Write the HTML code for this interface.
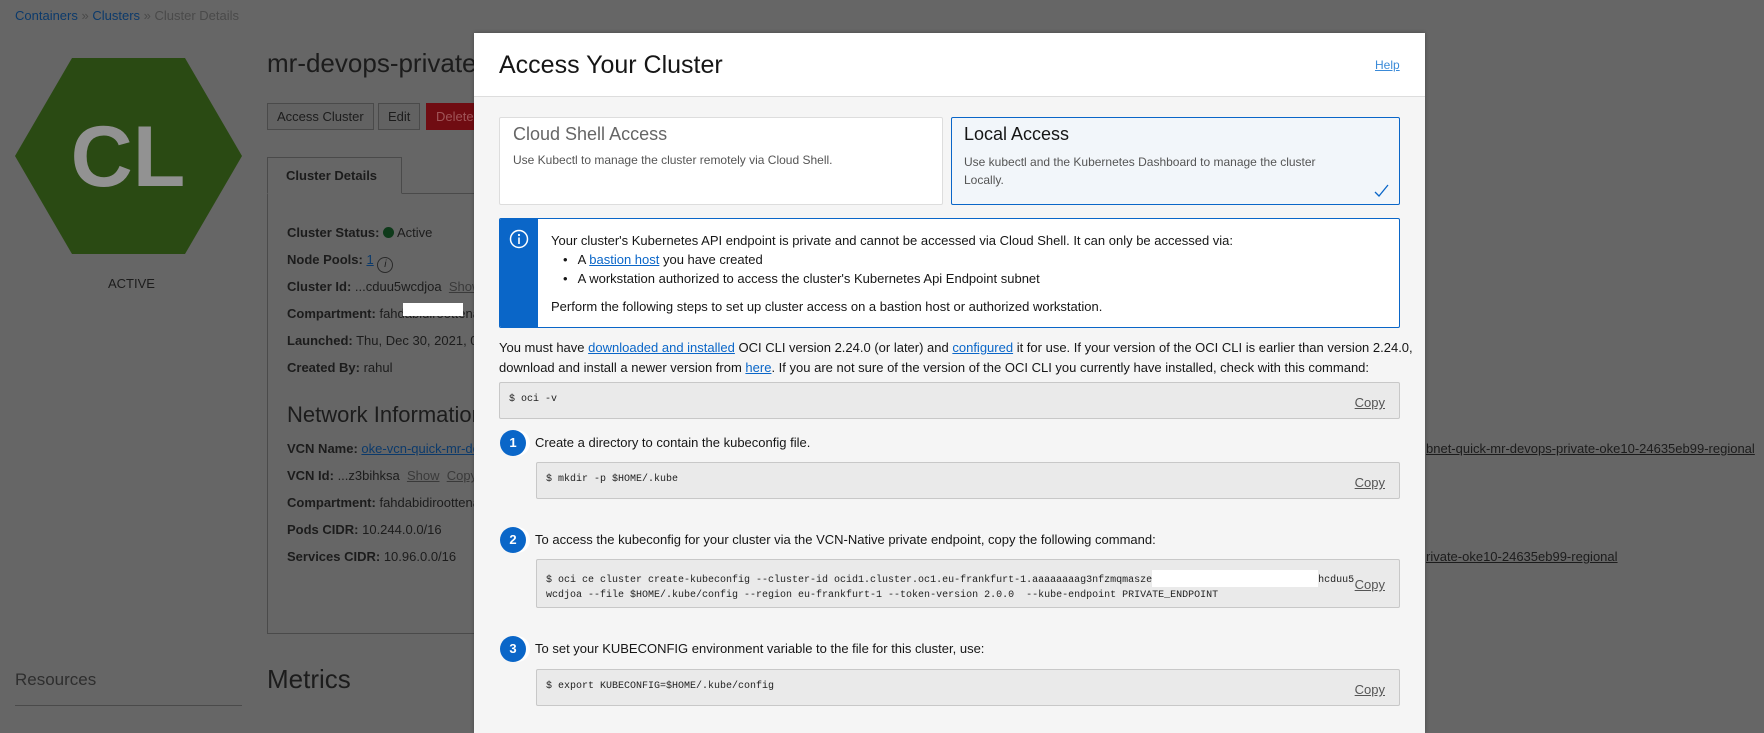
<!DOCTYPE html>
<html><head><meta charset="utf-8"><style>
*{margin:0;padding:0;box-sizing:border-box}
body{width:1764px;height:715px;overflow:hidden;background:#666;font-family:"Liberation Sans",sans-serif;position:relative;color:#1c1c1c}
.a{position:absolute;white-space:nowrap}
.lk{color:#0c3a6b;text-decoration:underline}
.b{font-weight:bold}
.pl{font-size:13px;color:#1c1c1c}
.btn{position:absolute;height:27px;border:1px solid #4a4a4a;background:#626262;font-size:13px;line-height:25px;padding:0 9px;color:#1c1c1c}
.m{position:absolute;left:474px;top:33px;width:951px;height:700px;background:#f5f5f5;box-shadow:0 0 4px rgba(0,0,0,.3)}
.mt{font-size:13px;color:#161616}
.ml{color:#0a66c8;text-decoration:underline}
.code{position:absolute;background:#eaeaea;border:1px solid #c8c8c8;border-radius:2px;font-family:"Liberation Mono",monospace;font-size:10px;color:#222}
.copy{position:absolute;right:14px;font-family:"Liberation Sans",sans-serif;font-size:13px;color:#555;text-decoration:underline}
.num{position:absolute;width:26px;height:26px;border-radius:50%;background:#0a66c8;color:#fff;font-weight:bold;font-size:13px;text-align:center;line-height:26px;box-shadow:4px 0 0 #fff}
</style></head><body>
<div class="a" style="left:15px;top:8px;font-size:13px;color:#4a4a4a"><span style="color:#0c3a6b">Containers</span> » <span style="color:#0c3a6b">Clusters</span> » Cluster Details</div>
<svg class="a" style="left:15px;top:58px" width="227" height="196"><polygon points="57,0 170,0 227,98 170,196 57,196 0,98" fill="#2a4a13"/><text x="113" y="128" font-family="Liberation Sans" font-weight="bold" font-size="86" fill="#929292" text-anchor="middle">CL</text></svg>
<div class="a" style="left:108px;top:276px;font-size:13px;color:#1c1c1c">ACTIVE</div>
<div class="a" style="left:267px;top:48px;font-size:26px;color:#1c1c1c">mr-devops-private</div>
<div class="btn" style="left:267px;top:103px">Access Cluster</div>
<div class="btn" style="left:378px;top:103px">Edit</div>
<div class="btn" style="left:426px;top:103px;background:#700c12;border-color:#700c12;color:#a05558;width:60px">Delete</div>
<div class="a" style="left:267px;top:193px;width:300px;height:441px;border:1px solid #4a4a4a"></div>
<div class="a" style="left:267px;top:157px;width:135px;height:37px;border:1px solid #4a4a4a;border-bottom:1px solid #666;background:#666;font-size:13px;font-weight:bold;line-height:36px;padding-left:18px">Cluster Details</div>
<div class="a pl" style="left:287px;top:225px"><span class="b">Cluster Status:</span> <span style="display:inline-block;width:11px;height:11px;border-radius:50%;background:#0e3a1a;vertical-align:-1px"></span> Active</div>
<div class="a pl" style="left:287px;top:252px"><span class="b">Node Pools:</span> <span class="lk">1</span> <span style="display:inline-block;width:16px;height:16px;border:1px solid #2a2a2a;border-radius:50%;font-size:10px;text-align:center;line-height:14px;font-style:italic;vertical-align:-3px">i</span></div>
<div class="a pl" style="left:287px;top:279px"><span class="b">Cluster Id:</span> ...cduu5wcdjoa &nbsp;<span style="text-decoration:underline;color:#3a3a3a">Show</span></div>
<div class="a pl" style="left:287px;top:306px"><span class="b">Compartment:</span> fahdabidiroottena</div>
<div class="a" style="left:403px;top:303px;width:60px;height:13px;background:#fff"></div>
<div class="a pl" style="left:287px;top:333px"><span class="b">Launched:</span> Thu, Dec 30, 2021, 09</div>
<div class="a pl" style="left:287px;top:360px"><span class="b">Created By:</span> rahul</div>
<div class="a" style="left:287px;top:402px;font-size:22px">Network Information</div>
<div class="a pl" style="left:287px;top:441px"><span class="b">VCN Name:</span> <span class="lk">oke-vcn-quick-mr-devops</span></div>
<div class="a pl" style="left:287px;top:468px"><span class="b">VCN Id:</span> ...z3bihksa &nbsp;<span style="text-decoration:underline;color:#3a3a3a">Show</span> &nbsp;<span style="text-decoration:underline;color:#3a3a3a">Copy</span></div>
<div class="a pl" style="left:287px;top:495px"><span class="b">Compartment:</span> fahdabidiroottena</div>
<div class="a pl" style="left:287px;top:522px"><span class="b">Pods CIDR:</span> 10.244.0.0/16</div>
<div class="a pl" style="left:287px;top:549px"><span class="b">Services CIDR:</span> 10.96.0.0/16</div>
<div class="a pl lk" style="left:1426px;top:441px">bnet-quick-mr-devops-private-oke10-24635eb99-regional</div>
<div class="a pl lk" style="left:1426px;top:549px">rivate-oke10-24635eb99-regional</div>
<div class="a" style="left:15px;top:670px;font-size:17px;color:#2e2e2e">Resources</div>
<div class="a" style="left:15px;top:705px;width:227px;border-top:1px solid #4a4a4a"></div>
<div class="a" style="left:267px;top:664px;font-size:26px">Metrics</div>

<div class="m">
<div style="position:absolute;left:0;top:0;width:951px;height:64px;background:#fff;border-bottom:1px solid #ddd"></div>
<div class="a" style="left:25px;top:18px;font-size:25px;color:#161616">Access Your Cluster</div>
<div class="a ml" style="left:901px;top:25px;font-size:12px;color:#3a8ad8">Help</div>
<div class="a" style="left:25px;top:84px;width:444px;height:88px;background:#fff;border:1px solid #ddd;border-radius:2px"></div>
<div class="a" style="left:39px;top:91px;font-size:18px;color:#666">Cloud Shell Access</div>
<div class="a" style="left:39px;top:120px;font-size:12px;color:#555">Use Kubectl to manage the cluster remotely via Cloud Shell.</div>
<div class="a" style="left:477px;top:84px;width:449px;height:88px;background:#f2f6fa;border:1px solid #0a66c8;border-radius:2px"></div>
<div class="a" style="left:490px;top:91px;font-size:18px;color:#161616">Local Access</div>
<div class="a" style="left:490px;top:120px;font-size:12px;color:#555;line-height:18px;white-space:normal;width:360px">Use kubectl and the Kubernetes Dashboard to manage the cluster Locally.</div>
<svg class="a" style="left:900px;top:151px" width="16" height="14"><path d="M1 8 L5 12 L14 1" stroke="#0a66c8" stroke-width="1.3" fill="none"/></svg>
<div class="a" style="left:25px;top:185px;width:901px;height:110px;background:#fff;border:1px solid #0a66c8;border-radius:2px;overflow:hidden"><div style="width:38px;height:110px;background:#0a66c8"></div></div>
<svg class="a" style="left:35px;top:196px" width="20" height="20"><circle cx="10" cy="10" r="8.5" stroke="#fff" stroke-width="1.5" fill="none"/><rect x="9.2" y="8.5" width="1.6" height="6.5" fill="#fff"/><circle cx="10" cy="6" r="1.1" fill="#fff"/></svg>
<div class="a mt" style="left:77px;top:200px">Your cluster's Kubernetes API endpoint is private and cannot be accessed via Cloud Shell. It can only be accessed via:</div>
<div class="a mt" style="left:89px;top:219px">•&nbsp;&nbsp; A <span class="ml">bastion host</span> you have created</div>
<div class="a mt" style="left:89px;top:238px">•&nbsp;&nbsp; A workstation authorized to access the cluster's Kubernetes Api Endpoint subnet</div>
<div class="a mt" style="left:77px;top:266px">Perform the following steps to set up cluster access on a bastion host or authorized workstation.</div>
<div class="a mt" style="left:25px;top:305px;line-height:20px">You must have <span class="ml">downloaded and installed</span> OCI CLI version 2.24.0 (or later) and <span class="ml">configured</span> it for use. If your version of the OCI CLI is earlier than version 2.24.0,<br>download and install a newer version from <span class="ml">here</span>. If you are not sure of the version of the OCI CLI you currently have installed, check with this command:</div>
<div class="code" style="left:25px;top:349px;width:901px;height:37px"><span class="a" style="left:9px;top:11px">$ oci -v</span><span class="copy" style="top:12px">Copy</span></div>
<div class="num" style="left:26px;top:397px">1</div>
<div class="a mt" style="left:61px;top:402px">Create a directory to contain the kubeconfig file.</div>
<div class="code" style="left:62px;top:429px;width:864px;height:37px"><span class="a" style="left:9px;top:11px">$ mkdir -p $HOME/.kube</span><span class="copy" style="top:12px">Copy</span></div>
<div class="num" style="left:26px;top:494px">2</div>
<div class="a mt" style="left:61px;top:499px">To access the kubeconfig for your cluster via the VCN-Native private endpoint, copy the following command:</div>
<div class="code" style="left:62px;top:526px;width:864px;height:49px"><span class="a" style="left:9px;top:10px;line-height:15px">$ oci ce cluster create-kubeconfig --cluster-id ocid1.cluster.oc1.eu-frankfurt-1.aaaaaaaag3nfzmqmasze<span style="display:inline-block;width:166px;height:17px;background:#fff;vertical-align:-5px"></span>hcduu5<br>wcdjoa --file $HOME/.kube/config --region eu-frankfurt-1 --token-version 2.0.0&nbsp; --kube-endpoint PRIVATE_ENDPOINT</span><span class="copy" style="top:17px">Copy</span></div>
<div class="num" style="left:26px;top:603px">3</div>
<div class="a mt" style="left:61px;top:608px">To set your KUBECONFIG environment variable to the file for this cluster, use:</div>
<div class="code" style="left:62px;top:636px;width:864px;height:37px"><span class="a" style="left:9px;top:11px">$ export KUBECONFIG=$HOME/.kube/config</span><span class="copy" style="top:12px">Copy</span></div>
</div>
</body></html>
